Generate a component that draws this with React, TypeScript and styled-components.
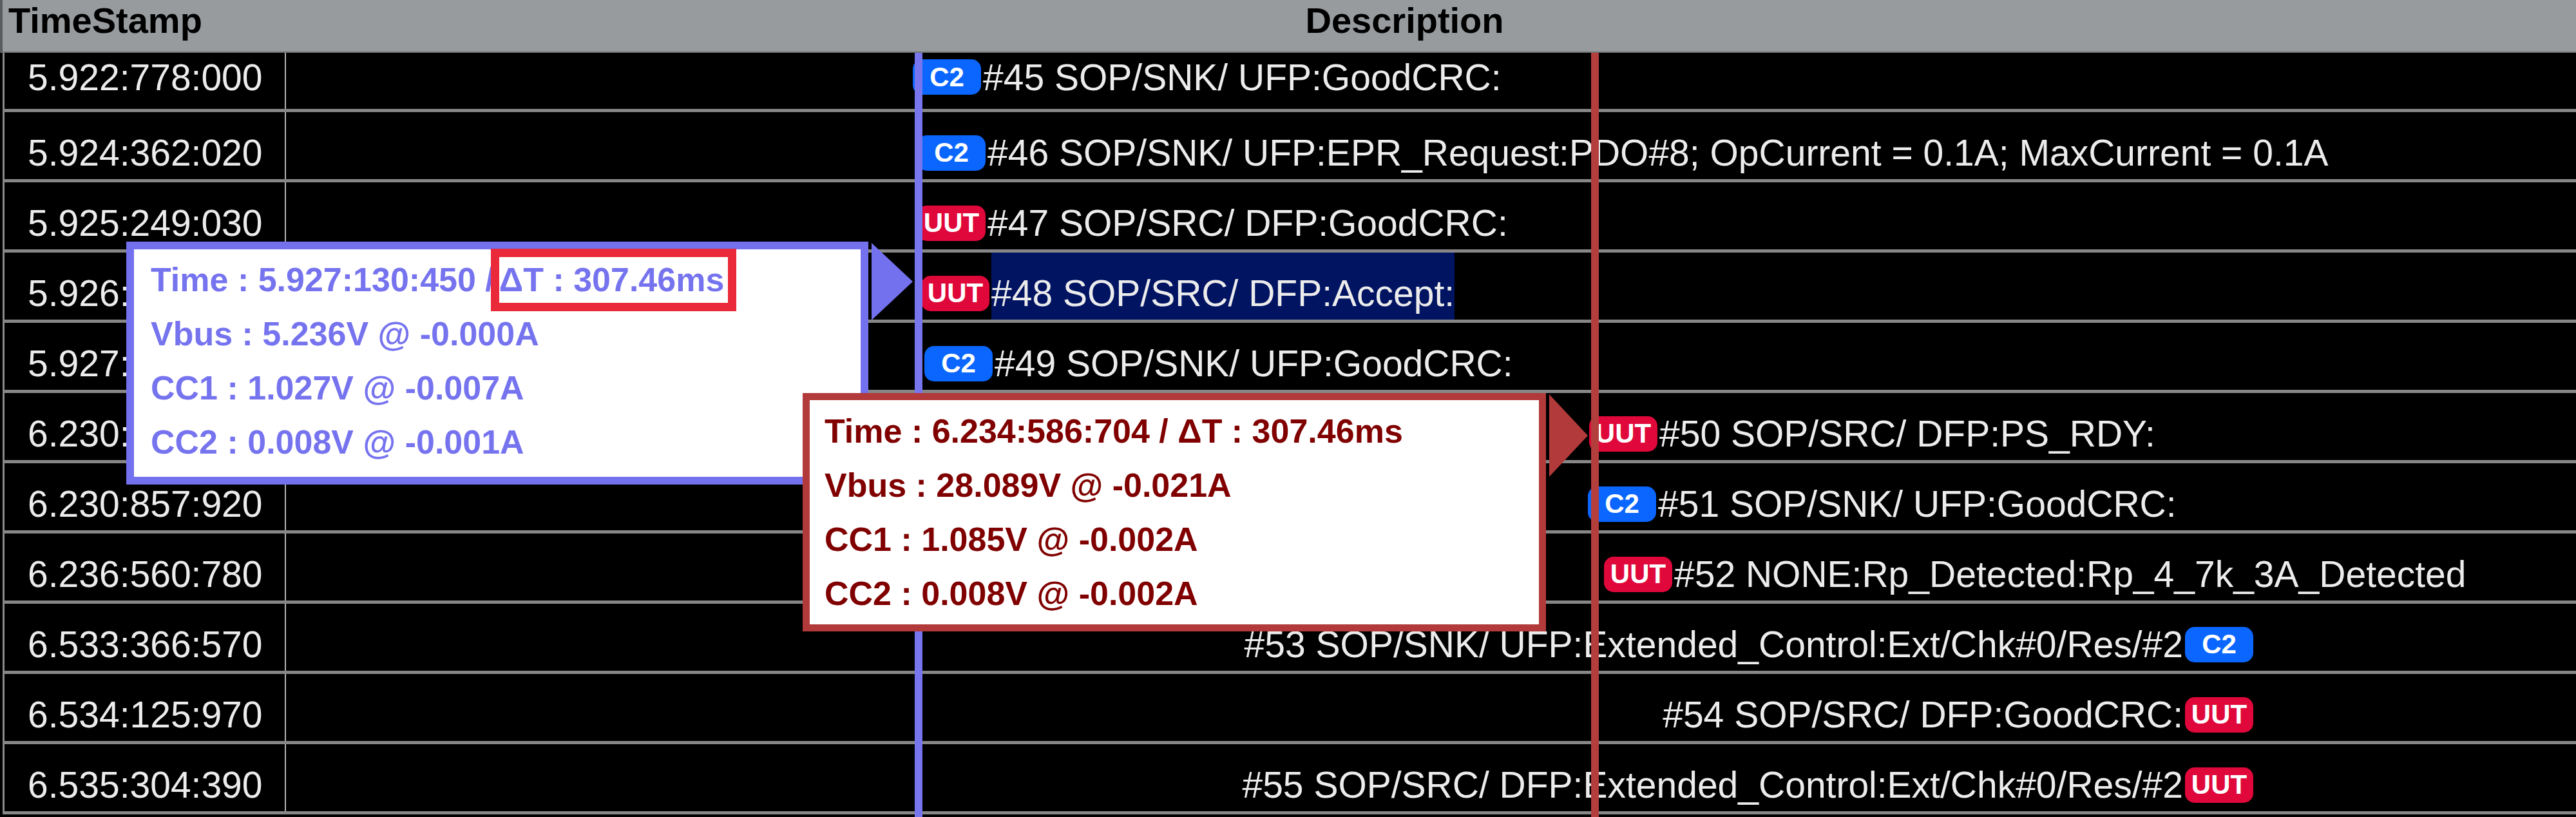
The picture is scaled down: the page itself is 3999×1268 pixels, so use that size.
import React from "react";
import styled, { createGlobalStyle } from "styled-components";

const Global = createGlobalStyle`
  html, body { margin: 0; padding: 0; background: #000; overflow: hidden; }
  #root { width: 3999px; height: 1268px; }
  * { box-sizing: border-box; }
`;

const Screen = styled.div`
  position: relative;
  width: 3999px;
  height: 1268px;
  background: #000;
  overflow: hidden;
  font-family: "Liberation Sans", Arial, sans-serif;
`;

const Header = styled.div`
  display: grid;
  grid-template-columns: 444px 1fr;
  height: 82px;
  background: #979b9e;
  border-bottom: 2px solid #6e7174;
  border-left: 4px solid #5a5d60;
`;

const HeadLabel = styled.div<{ $center?: boolean }>`
  font-weight: 700;
  font-size: 56px;
  line-height: 64px;
  color: #000;
  padding-left: ${(p) => (p.$center ? 0 : 9)}px;
  padding-right: ${(p) => (p.$center ? 86 : 0)}px;
  text-align: ${(p) => (p.$center ? "center" : "left")};
  white-space: nowrap;
`;

const Body = styled.div`
  padding-left: 4px;
`;

const Row = styled.div<{ $first?: boolean }>`
  display: grid;
  grid-template-columns: 440px 1fr;
  height: ${(p) => (p.$first ? 92 : 109)}px;
  border-bottom: 5px solid #878787;
`;

const TimeCell = styled.div`
  display: flex;
  align-items: stretch;
  border-left: 3px solid #8a8a8a;
  border-right: 2px solid #b4b4b4;
  padding-left: 36px;
`;

const DescCell = styled.div<{ $pad: number; $right?: boolean }>`
  display: flex;
  align-items: stretch;
  justify-content: ${(p) => (p.$right ? "flex-end" : "flex-start")};
  padding-left: ${(p) => (p.$right ? 0 : p.$pad)}px;
  padding-right: ${(p) => (p.$right ? p.$pad : 0)}px;
  gap: 3px;
`;

const Slot = styled.div<{ $first?: boolean; $selected?: boolean }>`
  display: flex;
  align-items: center;
  padding-top: ${(p) => (p.$first ? 0 : 22)}px;
  padding-bottom: ${(p) => (p.$first ? 12 : 0)}px;
  font-size: 57px;
  line-height: 64px;
  color: #ececec;
  white-space: nowrap;
  background: ${(p) => (p.$selected ? "#001462" : "transparent")};
`;

const Badge = styled.span<{ $kind: "C2" | "UUT" }>`
  display: inline-flex;
  align-items: center;
  justify-content: center;
  flex-shrink: 0;
  min-width: 106px;
  height: 55px;
  padding: 0 4px;
  border-radius: 15px;
  background: ${(p) => (p.$kind === "C2" ? "#0a66ff" : "#e0073b")};
  color: #fff;
  font-weight: 700;
  font-size: 42px;
  line-height: 1;
`;

const Cursor = styled.div<{ $left: number; $color: string }>`
  position: absolute;
  top: 82px;
  bottom: 0;
  left: ${(p) => p.$left}px;
  width: 12px;
  background: ${(p) => p.$color};
  z-index: 1;
`;

const Tip = styled.div<{
  $left: number;
  $top: number;
  $w: number;
  $h: number;
  $border: string;
  $bw: number;
  $text: string;
  $z: number;
  $padL: number;
  $padT: number;
}>`
  position: absolute;
  left: ${(p) => p.$left}px;
  top: ${(p) => p.$top}px;
  width: ${(p) => p.$w}px;
  height: ${(p) => p.$h}px;
  border: ${(p) => p.$bw}px solid ${(p) => p.$border};
  background: #fff;
  z-index: ${(p) => p.$z};
  padding: ${(p) => p.$padT}px 0 0 ${(p) => p.$padL}px;
  color: ${(p) => p.$text};
  font-weight: 700;
  font-size: 52px;
  white-space: nowrap;
`;

const TipLine = styled.div`
  display: flex;
  align-items: center;
  height: 84px;
  line-height: 84px;
`;

const DeltaBox = styled.span`
  position: relative;
  display: inline-flex;
  align-items: center;
  height: 97px;
  line-height: 71px;
  border: 13px solid #ea2a3a;
  background: #fff;
  padding: 0 6px 0 0;
  margin-left: -6px;
`;

const Arrow = styled.svg<{ $left: number; $top: number; $z: number }>`
  position: absolute;
  left: ${(p) => p.$left}px;
  top: ${(p) => p.$top}px;
  z-index: ${(p) => p.$z};
`;

type RowData = {
  ts: string;
  badge: "C2" | "UUT";
  text: string;
  x: number;
  right?: boolean;
  selected?: boolean;
};

const rows: RowData[] = [
  { ts: "5.922:778:000", badge: "C2", text: "#45 SOP/SNK/ UFP:GoodCRC:", x: 1417 },
  {
    ts: "5.924:362:020",
    badge: "C2",
    text: "#46 SOP/SNK/ UFP:EPR_Request:PDO#8; OpCurrent = 0.1A; MaxCurrent = 0.1A",
    x: 1424,
  },
  { ts: "5.925:249:030", badge: "UUT", text: "#47 SOP/SRC/ DFP:GoodCRC:", x: 1424 },
  { ts: "5.926:991:380", badge: "UUT", text: "#48 SOP/SRC/ DFP:Accept:", x: 1430, selected: true },
  { ts: "5.927:130:450", badge: "C2", text: "#49 SOP/SNK/ UFP:GoodCRC:", x: 1435 },
  { ts: "6.230:245:110", badge: "UUT", text: "#50 SOP/SRC/ DFP:PS_RDY:", x: 2467 },
  { ts: "6.230:857:920", badge: "C2", text: "#51 SOP/SNK/ UFP:GoodCRC:", x: 2465 },
  { ts: "6.236:560:780", badge: "UUT", text: "#52 NONE:Rp_Detected:Rp_4_7k_3A_Detected", x: 2490 },
  {
    ts: "6.533:366:570",
    badge: "C2",
    text: "#53 SOP/SNK/ UFP:Extended_Control:Ext/Chk#0/Res/#2",
    x: 3498,
    right: true,
  },
  { ts: "6.534:125:970", badge: "UUT", text: "#54 SOP/SRC/ DFP:GoodCRC:", x: 3498, right: true },
  {
    ts: "6.535:304:390",
    badge: "UUT",
    text: "#55 SOP/SRC/ DFP:Extended_Control:Ext/Chk#0/Res/#2",
    x: 3498,
    right: true,
  },
];

const CELL_LEFT = 444;
const SCREEN_W = 3999;

export default function App() {
  return (
    <>
      <Global />
      <Screen>
        <Header>
          <HeadLabel>TimeStamp</HeadLabel>
          <HeadLabel $center>Description</HeadLabel>
        </Header>
        <Body>
          {rows.map((r, i) => {
            const first = i === 0;
            const badge = (
              <Slot $first={first}>
                <Badge $kind={r.badge}>{r.badge}</Badge>
              </Slot>
            );
            const msg = (
              <Slot $first={first} $selected={r.selected}>
                {r.text}
              </Slot>
            );
            return (
              <Row key={r.ts} $first={first}>
                <TimeCell>
                  <Slot $first={first}>{r.ts}</Slot>
                </TimeCell>
                <DescCell
                  $right={r.right}
                  $pad={r.right ? SCREEN_W - r.x : r.x - CELL_LEFT}
                >
                  {r.right ? (
                    <>
                      {msg}
                      {badge}
                    </>
                  ) : (
                    <>
                      {badge}
                      {msg}
                    </>
                  )}
                </DescCell>
              </Row>
            );
          })}
        </Body>

        <Cursor $left={1420} $color="#7876ee" />
        <Cursor $left={2470} $color="#b43e3c" />

        <Tip
          $left={196}
          $top={375}
          $w={1152}
          $h={377}
          $bw={12}
          $border="#7371ee"
          $text="#7673ef"
          $z={2}
          $padL={26}
          $padT={5}
        >
          <TipLine>
            Time : 5.927:130:450 /<DeltaBox>ΔT : 307.46ms</DeltaBox>
          </TipLine>
          <TipLine>Vbus : 5.236V @ -0.000A</TipLine>
          <TipLine>CC1 : 1.027V @ -0.007A</TipLine>
          <TipLine>CC2 : 0.008V @ -0.001A</TipLine>
        </Tip>
        <Arrow $left={1353} $top={377} $z={2} width="64" height="120" viewBox="0 0 64 120">
          <polygon points="0,0 64,60 0,120" fill="#7371ee" />
        </Arrow>

        <Tip
          $left={1246}
          $top={610}
          $w={1154}
          $h={370}
          $bw={11}
          $border="#b23a3a"
          $text="#800000"
          $z={3}
          $padL={23}
          $padT={6}
        >
          <TipLine>Time : 6.234:586:704 / ΔT : 307.46ms</TipLine>
          <TipLine>Vbus : 28.089V @ -0.021A</TipLine>
          <TipLine>CC1 : 1.085V @ -0.002A</TipLine>
          <TipLine>CC2 : 0.008V @ -0.002A</TipLine>
        </Tip>
        <Arrow $left={2405} $top={612} $z={3} width="60" height="128" viewBox="0 0 60 128">
          <polygon points="0,0 60,64 0,128" fill="#b23a3a" />
        </Arrow>
      </Screen>
    </>
  );
}
